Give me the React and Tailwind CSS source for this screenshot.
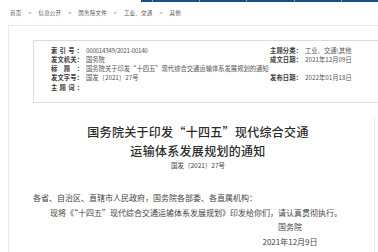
const font = { fontFamily: '"Noto Sans CJK SC", "Liberation Sans", sans-serif' };

function Label({ text }) {
  return (
    <div className="flex w-[32px] justify-between font-semibold text-[#3a3a3a]">
      {text.split('').map((c, i) => (
        <span key={i}>{c}</span>
      ))}
    </div>
  );
}

function NavBar() {
  const segs = [11, 46, 46, 47, 46, 36];
  return (
    <div className="flex h-[2px]">
      <div className="w-[142px] bg-white" />
      {segs.map((w, i) => (
        <div key={i} className="flex h-full">
          {i > 0 && <div className="w-px bg-[#7a9bbf]" />}
          <div className="h-full bg-[#11508c]" style={{ width: w }} />
        </div>
      ))}
    </div>
  );
}

export default function App() {
  const crumbs = ['首页', '信息公开', '国务院文件', '工业、交通', '其他'];
  return (
    <div className="relative h-[252px] w-[378px] overflow-hidden bg-white" style={font}>
      <NavBar />
      <div className="flex h-[8px] items-center gap-[7px] pl-[10px] mt-[7px] text-[5.5px] leading-[8px] text-[#555]">
        {crumbs.map((c, i) => (
          <div key={i} className="flex items-center gap-[7px]">
            {i > 0 && <span className="text-[#999]">&gt;</span>}
            <span className="tracking-[0.2px]">{c}</span>
          </div>
        ))}
      </div>

      <div className="ml-[8px] mt-[8px] w-[400px] border-l border-t border-[#e8e8e8]">
        <div className="pl-[24px] pt-[14px]">
          <div className="h-[63px] border border-r-0 border-[#dcdcdc] pl-[17px] pt-[5px] text-[6.3px] leading-[9px] text-[#555]">
            <div className="grid grid-cols-[35px_184px_35px_1fr]">
              <Label text="索引号：" />
              <span className="tracking-[-0.3px]">000014349/2021-00140</span>
              <Label text="主题分类：" />
              <span>工业、交通\其他</span>

              <Label text="发文机关：" />
              <span>国务院</span>
              <Label text="成文日期：" />
              <span>2021年12月09日</span>

              <Label text="标题：" />
              <span className="col-span-3">国务院关于印发“十四五”现代综合交通运输体系发展规划的通知</span>

              <Label text="发文字号：" />
              <span>国发〔2021〕27号</span>
              <Label text="发布日期：" />
              <span>2022年01月18日</span>

              <div className="mt-[1px]">
                <Label text="主题词：" />
              </div>
              <span />
            </div>
          </div>
        </div>

        <div className="mt-[14px] w-[366px] border-r border-[#ececec] pt-[5px] pb-[20px]">
          <div className="pl-[13px] text-center text-[12px] font-medium leading-[19px] tracking-[0.3px] text-[#2b2b2b]">
            <div>国务院关于印发“十四五”现代综合交通</div>
            <div>运输体系发展规划的通知</div>
          </div>
          <div className="pl-[13px] text-center text-[6.5px] leading-[10px] text-[#444]">
            国发〔2021〕27号
          </div>

          <div className="mt-[21px] pl-[24px] text-[8px] leading-[14.5px] text-[#444]">
            <p>各省、自治区、直辖市人民政府，国务院各部委、各直属机构：</p>
            <p className="pl-[17px]">现将《“十四五”现代综合交通运输体系发展规划》印发给你们，请认真贯彻执行。</p>
          </div>
          <div className="ml-[251px] flex w-[60px] flex-col items-center text-[8px] leading-[14.5px] text-[#444]">
            <span>国务院</span>
            <span>2021年12月9日</span>
          </div>
        </div>
      </div>
    </div>
  );
}
